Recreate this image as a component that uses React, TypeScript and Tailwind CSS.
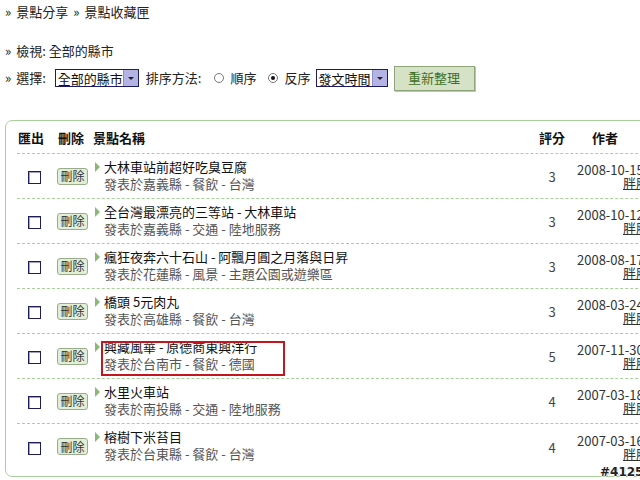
import React from "react";

const rows = [
  { title: "大林車站前超好吃臭豆腐", sub: "發表於嘉義縣 - 餐飲 - 台灣", score: 3, date: "2008-10-15" },
  { title: "全台灣最漂亮的三等站 - 大林車站", sub: "發表於嘉義縣 - 交通 - 陸地服務", score: 3, date: "2008-10-12" },
  { title: "瘋狂夜奔六十石山 - 阿飄月圓之月落與日昇", sub: "發表於花蓮縣 - 風景 - 主題公園或遊樂區", score: 3, date: "2008-08-17" },
  { title: "橋頭 5元肉丸", sub: "發表於高雄縣 - 餐飲 - 台灣", score: 3, date: "2008-03-24" },
  { title: "興藏風華 - 原德商東興洋行", sub: "發表於台南市 - 餐飲 - 德國", score: 5, date: "2007-11-30", hl: true },
  { title: "水里火車站", sub: "發表於南投縣 - 交通 - 陸地服務", score: 4, date: "2007-03-18" },
  { title: "榕樹下米苔目", sub: "發表於台東縣 - 餐飲 - 台灣", score: 4, date: "2007-03-16" },
];

function FakeSelect({ label, width }: { label: string; width: string }) {
  return (
    <div className={`flex h-[18px] ${width} items-stretch border border-[#1c1c5e] bg-white`}>
      <div className="flex flex-1 items-center overflow-hidden whitespace-nowrap pl-[2px] text-[13px] leading-none text-[#111]">
        {label}
      </div>
      <div className="flex w-[15px] shrink-0 items-center justify-center border-l border-[#8e8ec8] bg-[#b4b4e4]">
        <div className="h-0 w-0 border-l-[3px] border-r-[3px] border-t-[3px] border-l-transparent border-r-transparent border-t-[#222]" />
      </div>
    </div>
  );
}

function Radio({ checked }: { checked?: boolean }) {
  return (
    <div className="flex h-[10px] w-[10px] items-center justify-center rounded-full border border-[#777] bg-white">
      {checked && <div className="h-[4px] w-[4px] rounded-full bg-[#111]" />}
    </div>
  );
}

export default function App() {
  return (
    <div
      className="relative h-[480px] w-[640px] overflow-hidden bg-white text-[13px] text-[#222]"
      style={{ fontFamily: '"Noto Sans CJK TC", "Liberation Sans", sans-serif' }}
    >
      <div className="pl-[5px]">
        <div className="flex h-[24px] items-center gap-[5px]">
          <span>»</span>
          <span>景點分享</span>
          <span>»</span>
          <span>景點收藏匣</span>
        </div>
        <div className="mt-[17px] flex h-[20px] items-center gap-[5px]">
          <span>»</span>
          <span>檢視: 全部的縣市</span>
        </div>
        <div className="mt-[4px] flex h-[26px] items-center whitespace-nowrap">
          <span>»</span>
          <span className="ml-[5px]">選擇:</span>
          <div className="ml-[9px]">
            <FakeSelect label="全部的縣市" width="w-[84px]" />
          </div>
          <span className="ml-[7px]">排序方法:</span>
          <div className="ml-[13px]">
            <Radio />
          </div>
          <span className="ml-[6px]">順序</span>
          <div className="ml-[11px]">
            <Radio checked />
          </div>
          <span className="ml-[7px]">反序</span>
          <div className="ml-[5px]">
            <FakeSelect label="發文時間" width="w-[72px]" />
          </div>
          <button className="ml-[6px] flex h-[25px] w-[81px] items-center justify-center border border-[#8ea67a] bg-[#d5e2c5] text-[13px] text-[#3f6f26] shadow-[1px_1px_0_#b8c8a8]">
            重新整理
          </button>
        </div>
      </div>

      <div className="ml-[5px] mt-[29px] w-[700px] rounded-[7px] border border-[#a9cf9c] px-[11px] pb-[7px]">
        <div className="flex h-[33px] items-center border-b border-dashed border-[#a9d09b] pt-[2px] font-bold text-[#111]">
          <div className="w-[34px] pl-[1px]">匯出</div>
          <div className="w-[41px] pl-[7px]">刪除</div>
          <div className="w-[438px] pl-[1px]">景點名稱</div>
          <div className="w-[44px] text-center">評分</div>
          <div className="flex-1 pl-[18px]">作者</div>
        </div>
        {rows.map((r, i) => (
          <div
            key={i}
            className={`relative flex h-[45px] ${i < rows.length - 1 ? "border-b border-dashed border-[#a9d09b]" : ""}`}
          >
            <div className="flex w-[34px] items-center pl-[11px] pt-[3px]">
              <div className="h-[13px] w-[13px] border border-[#1c1c5e] bg-white shadow-[inset_1px_1px_0_#a0a0c0]" />
            </div>
            <div className="flex w-[41px] items-center pl-[6px]">
              <div className="flex h-[17px] w-[31px] items-center justify-center rounded-[3px] border border-[#98ad88] bg-[#e3eed8] text-[12px] leading-none text-[#333]">
                刪除
              </div>
            </div>
            <div className="w-[438px] pt-[4px]">
              <div className="flex h-[17px] items-center">
                <div className="ml-[3px] h-0 w-0 border-b-[5px] border-l-[5px] border-t-[5px] border-b-transparent border-l-[#8db67a] border-t-transparent" />
                <span className="ml-[4px] whitespace-nowrap text-[#111]">{r.title}</span>
              </div>
              <div className="flex h-[17px] items-center whitespace-nowrap pl-[12px] text-[#555]">{r.sub}</div>
            </div>
            <div className="flex w-[44px] items-center justify-center pt-[2px] text-[#444]">{r.score}</div>
            <div className="flex flex-1 flex-col justify-center whitespace-nowrap pt-[1px] text-[#333]">
              <div className="h-[13px] pl-[3px] leading-[13px]">{r.date}</div>
              <div className="h-[14px] pl-[49px] leading-[14px] underline">胖胖</div>
            </div>
            {r.hl && (
              <div className="absolute left-[84px] top-[7px] h-[35px] w-[184px] border-2 border-[#c4161c]" />
            )}
          </div>
        ))}
      </div>

      <div
        className="absolute left-[600px] top-[463px] text-[12px] font-bold text-[#222]"
        style={{ fontFamily: '"DejaVu Sans", sans-serif', textShadow: "1px 0 0 #fff, -1px 0 0 #fff, 0 1px 0 #fff, 0 -1px 0 #fff, 1px 1px 1px #888" }}
      >
        #4125
      </div>
    </div>
  );
}
